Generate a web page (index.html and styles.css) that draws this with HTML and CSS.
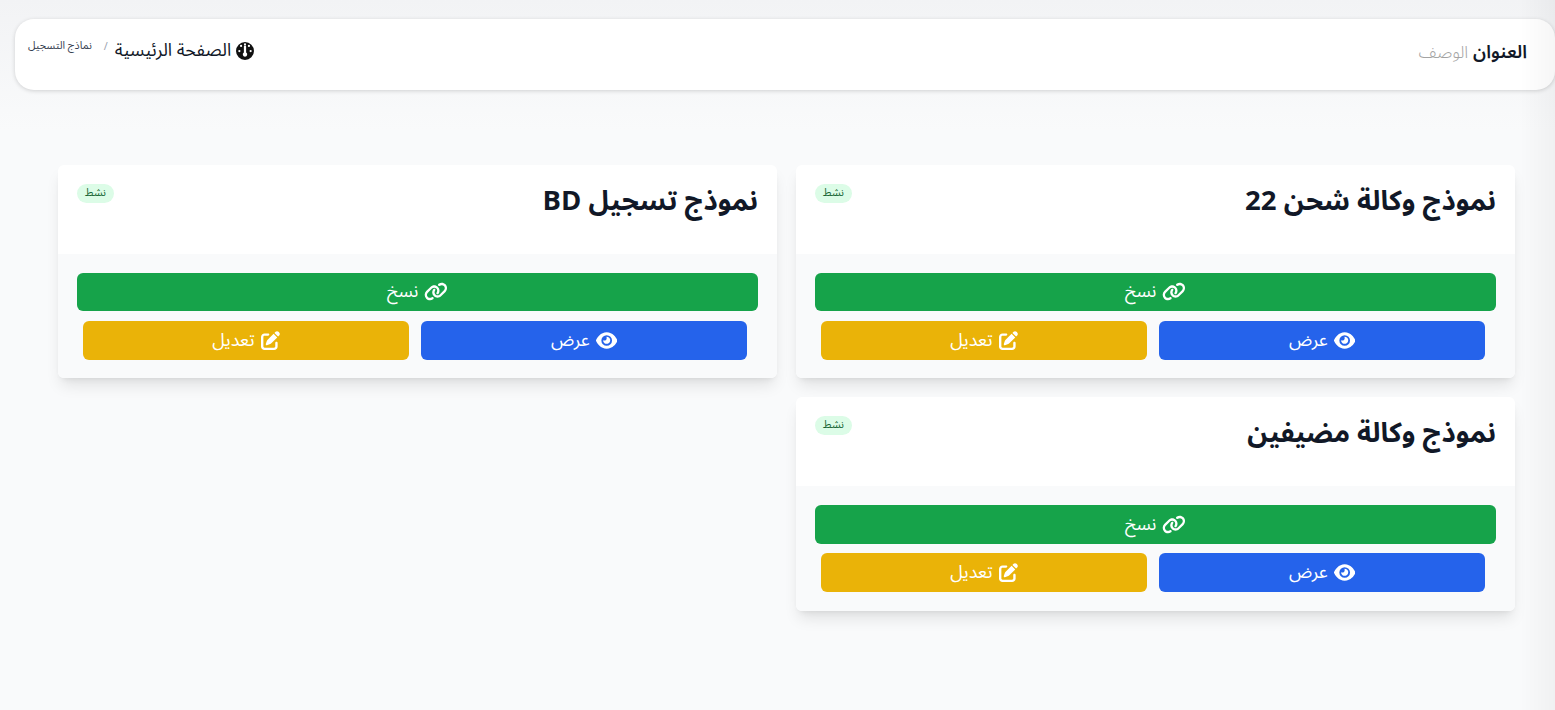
FILE: index.html
```html
<!DOCTYPE html>
<html lang="ar" dir="rtl">
<head>
<meta charset="utf-8">
<title>نماذج التسجيل</title>
<link rel="stylesheet" href="styles.css">
</head>
<body>
<header class="topbar">
  <div class="heading"><strong>العنوان</strong> <span class="desc">الوصف</span></div>
  <nav class="crumbs">
    <span class="crumb-current">نماذج التسجيل</span>
    <span class="sep">/</span>
    <a class="home">
      <svg class="home-icon" viewBox="0 0 512 512"><path d="M256 0a256 256 0 1 0 0 512 256 256 0 1 0 0-512zm32 64a32 32 0 1 1-64 0 32 32 0 1 1 64 0zM256 416a64 64 0 0 1-32-119V128a32 32 0 1 1 64 0v169a64 64 0 0 1-32 119zM144 144a32 32 0 1 1 0-64 32 32 0 1 1 0 64zM96 288a32 32 0 1 1 0-64 32 32 0 1 1 0 64zm320 0a32 32 0 1 1 0-64 32 32 0 1 1 0 64zm-48-144a32 32 0 1 1 0-64 32 32 0 1 1 0 64z" fill-rule="evenodd"/></svg>
      <span>الصفحة الرئيسية</span>
    </a>
  </nav>
</header>
<main class="grid">
  <section class="stack">
    <article class="card">
      <div class="card-head"><h2>نموذج وكالة شحن 22</h2><span class="badge">نشط</span></div>
      <div class="card-foot">
        <a class="btn green"><svg class="ic" viewBox="0 0 640 512"><path d="M580 267c56-56 56-148 0-204-50-50-129-56-186-15l-2 1c-14 10-18 30-7 45s30 18 45 7l2-1c32-23 76-19 104 9 32 32 32 83 0 115L424 336c-32 32-83 32-115 0-28-28-32-72-9-104l1-2c10-14 7-34-7-45s-34-7-45 7l-1 2c-41 57-35 136 15 186 56 56 148 56 204 0zM60 245c-56 56-56 148 0 204 50 50 129 56 186 15l2-1c14-10 18-30 7-45s-30-18-45-7l-2 1c-32 23-76 19-104-9-32-32-32-83 0-115l112-112c32-32 83-32 115 0 28 28 32 72 9 104l-1 2c-10 14-7 34 7 45s34 7 45-7l1-2c41-57 35-136-15-186-56-56-148-56-204 0z"/></svg><span>نسخ</span></a>
        <div class="btn-row">
          <a class="btn blue"><svg class="ic" viewBox="0 0 576 512"><path d="M288 32C207 32 142 69 95 113 48 156 17 208 2 244c-3 8-3 17 0 25 15 36 46 88 93 131 47 44 112 81 193 81s146-37 193-81c47-43 78-95 93-131 3-8 3-17 0-25-15-36-46-88-93-131C434 69 369 32 288 32zM144 256a144 144 0 1 1 288 0 144 144 0 1 1-288 0zm144-64c0 35-29 64-64 64-7 0-14-1-20-3-6-2-12 1-12 7 0 5 1 10 2 15 14 51 67 82 118 68s82-67 68-118c-11-42-48-69-89-71-6 0-9 6-7 12 2 6 4 15 4 26z"/></svg><span>عرض</span></a>
          <a class="btn yellow"><svg class="ic" viewBox="0 0 512 512"><path d="M471.600 21.700c-21.900-21.900-57.300-21.900-79.200 0L362.300 51.700l97.900 97.900 30.100-30.100c21.900-21.900 21.900-57.300 0-79.200L471.600 21.700zm-299.200 220c-6.100 6.100-10.800 13.600-13.500 21.900l-29.600 88.800c-2.900 8.600-.6 18.100 5.800 24.600s15.900 8.700 24.600 5.800l88.800-29.600c8.200-2.700 15.700-7.400 21.900-13.500L437.700 172.300 339.700 74.300 172.400 241.700zM96 64C43 64 0 107 0 160V416c0 53 43 96 96 96H352c53 0 96-43 96-96V320c0-17.700-14.300-32-32-32s-32 14.300-32 32v96c0 17.700-14.300 32-32 32H96c-17.700 0-32-14.300-32-32V160c0-17.700 14.300-32 32-32h96c17.700 0 32-14.300 32-32s-14.300-32-32-32H96z"/></svg><span>تعديل</span></a>
        </div>
      </div>
    </article>
    <article class="card">
      <div class="card-head"><h2>نموذج وكالة مضيفين</h2><span class="badge">نشط</span></div>
      <div class="card-foot">
        <a class="btn green"><svg class="ic" viewBox="0 0 640 512"><path d="M580 267c56-56 56-148 0-204-50-50-129-56-186-15l-2 1c-14 10-18 30-7 45s30 18 45 7l2-1c32-23 76-19 104 9 32 32 32 83 0 115L424 336c-32 32-83 32-115 0-28-28-32-72-9-104l1-2c10-14 7-34-7-45s-34-7-45 7l-1 2c-41 57-35 136 15 186 56 56 148 56 204 0zM60 245c-56 56-56 148 0 204 50 50 129 56 186 15l2-1c14-10 18-30 7-45s-30-18-45-7l-2 1c-32 23-76 19-104-9-32-32-32-83 0-115l112-112c32-32 83-32 115 0 28 28 32 72 9 104l-1 2c-10 14-7 34 7 45s34 7 45-7l1-2c41-57 35-136-15-186-56-56-148-56-204 0z"/></svg><span>نسخ</span></a>
        <div class="btn-row">
          <a class="btn blue"><svg class="ic" viewBox="0 0 576 512"><path d="M288 32C207 32 142 69 95 113 48 156 17 208 2 244c-3 8-3 17 0 25 15 36 46 88 93 131 47 44 112 81 193 81s146-37 193-81c47-43 78-95 93-131 3-8 3-17 0-25-15-36-46-88-93-131C434 69 369 32 288 32zM144 256a144 144 0 1 1 288 0 144 144 0 1 1-288 0zm144-64c0 35-29 64-64 64-7 0-14-1-20-3-6-2-12 1-12 7 0 5 1 10 2 15 14 51 67 82 118 68s82-67 68-118c-11-42-48-69-89-71-6 0-9 6-7 12 2 6 4 15 4 26z"/></svg><span>عرض</span></a>
          <a class="btn yellow"><svg class="ic" viewBox="0 0 512 512"><path d="M471.600 21.700c-21.900-21.900-57.300-21.900-79.200 0L362.300 51.700l97.900 97.900 30.100-30.100c21.900-21.900 21.900-57.300 0-79.200L471.600 21.700zm-299.200 220c-6.100 6.100-10.800 13.600-13.500 21.900l-29.600 88.800c-2.900 8.600-.6 18.100 5.800 24.600s15.900 8.700 24.600 5.800l88.800-29.600c8.200-2.700 15.700-7.400 21.900-13.500L437.700 172.300 339.700 74.300 172.400 241.700zM96 64C43 64 0 107 0 160V416c0 53 43 96 96 96H352c53 0 96-43 96-96V320c0-17.700-14.300-32-32-32s-32 14.300-32 32v96c0 17.700-14.300 32-32 32H96c-17.700 0-32-14.300-32-32V160c0-17.700 14.300-32 32-32h96c17.700 0 32-14.300 32-32s-14.300-32-32-32H96z"/></svg><span>تعديل</span></a>
        </div>
      </div>
    </article>
  </section>
  <section class="stack">
    <article class="card">
      <div class="card-head"><h2>نموذج تسجيل BD</h2><span class="badge">نشط</span></div>
      <div class="card-foot">
        <a class="btn green"><svg class="ic" viewBox="0 0 640 512"><path d="M580 267c56-56 56-148 0-204-50-50-129-56-186-15l-2 1c-14 10-18 30-7 45s30 18 45 7l2-1c32-23 76-19 104 9 32 32 32 83 0 115L424 336c-32 32-83 32-115 0-28-28-32-72-9-104l1-2c10-14 7-34-7-45s-34-7-45 7l-1 2c-41 57-35 136 15 186 56 56 148 56 204 0zM60 245c-56 56-56 148 0 204 50 50 129 56 186 15l2-1c14-10 18-30 7-45s-30-18-45-7l-2 1c-32 23-76 19-104-9-32-32-32-83 0-115l112-112c32-32 83-32 115 0 28 28 32 72 9 104l-1 2c-10 14-7 34 7 45s34 7 45-7l1-2c41-57 35-136-15-186-56-56-148-56-204 0z"/></svg><span>نسخ</span></a>
        <div class="btn-row">
          <a class="btn blue"><svg class="ic" viewBox="0 0 576 512"><path d="M288 32C207 32 142 69 95 113 48 156 17 208 2 244c-3 8-3 17 0 25 15 36 46 88 93 131 47 44 112 81 193 81s146-37 193-81c47-43 78-95 93-131 3-8 3-17 0-25-15-36-46-88-93-131C434 69 369 32 288 32zM144 256a144 144 0 1 1 288 0 144 144 0 1 1-288 0zm144-64c0 35-29 64-64 64-7 0-14-1-20-3-6-2-12 1-12 7 0 5 1 10 2 15 14 51 67 82 118 68s82-67 68-118c-11-42-48-69-89-71-6 0-9 6-7 12 2 6 4 15 4 26z"/></svg><span>عرض</span></a>
          <a class="btn yellow"><svg class="ic" viewBox="0 0 512 512"><path d="M471.600 21.700c-21.900-21.900-57.300-21.900-79.200 0L362.300 51.700l97.900 97.900 30.100-30.100c21.900-21.900 21.900-57.300 0-79.200L471.600 21.700zm-299.200 220c-6.100 6.100-10.800 13.600-13.500 21.900l-29.600 88.800c-2.900 8.600-.6 18.100 5.800 24.600s15.900 8.700 24.600 5.800l88.800-29.600c8.200-2.700 15.700-7.400 21.900-13.500L437.700 172.300 339.700 74.300 172.400 241.700zM96 64C43 64 0 107 0 160V416c0 53 43 96 96 96H352c53 0 96-43 96-96V320c0-17.700-14.300-32-32-32s-32 14.300-32 32v96c0 17.700-14.300 32-32 32H96c-17.700 0-32-14.300-32-32V160c0-17.700 14.300-32 32-32h96c17.700 0 32-14.300 32-32s-14.300-32-32-32H96z"/></svg><span>تعديل</span></a>
        </div>
      </div>
    </article>
  </section>
</main>
</body>
</html>
```

FILE: styles.css
```css
* { box-sizing: border-box; }
html, body { height: 100%; }
body {
  margin: 0;
  overflow: hidden;
  background: linear-gradient(to bottom, #f2f3f5 0, #f9fafb 130px);
  font-family: "Noto Sans Arabic", "Noto Sans", sans-serif;
  color: #111827;
}
body::after {
  content: "";
  position: fixed;
  top: 0;
  bottom: 0;
  right: 0;
  width: 35px;
  background: linear-gradient(to right, rgba(0, 0, 0, 0), rgba(0, 0, 0, .035));
  pointer-events: none;
}
.topbar {
  display: flex;
  justify-content: space-between;
  margin: 19px 0 0 15px;
  height: 71px;
  padding: 0 28px 0 13px;
  background: #fff;
  border-radius: 19px;
  box-shadow: 0 1px 4px rgba(0, 0, 0, .16);
}
.heading { font-size: 18.4px; line-height: 24px; margin-top: 22px; }
.heading strong { font-weight: 600; }
.desc { color: #a3a3a3; font-weight: 300; font-size: 17px; }
.crumbs { display: flex; flex-direction: row-reverse; align-items: flex-start; gap: 7px; margin-top: 20px; }
.crumb-current { font-size: 10.7px; line-height: 14px; color: #374151; }
.sep { font-size: 10.7px; line-height: 14px; color: #9ca3af; margin: 1px 0 0 0; padding-left: 5px; }
.home { display: flex; align-items: center; gap: 5px; font-size: 17.8px; line-height: 24px; color: #111827; }
.home-icon { width: 18px; height: 18px; fill: #111; }
.grid {
  display: grid;
  grid-template-columns: 719px 719px;
  column-gap: 19px;
  padding: 74.7px 40px 0 0;
}
.stack { display: flex; flex-direction: column; gap: 18.9px; }
.card {
  background: #fff;
  border-radius: 6px;
  overflow: hidden;
  box-shadow: 0 10px 15px -3px rgba(0, 0, 0, .1), 0 4px 6px -4px rgba(0, 0, 0, .1);
}
.card-head { display: flex; justify-content: space-between; height: 89px; padding: 19px; }
.card-head h2 { margin: 1px 0 0; font-size: 27.5px; font-weight: 700; line-height: 32px; color: #111827; }
.badge {
  align-self: flex-start;
  width: 37px;
  height: 19px;
  border-radius: 10px;
  background: #dcfce7;
  color: #166534;
  font-size: 10.7px;
  line-height: 18px;
  text-align: center;
}
.card-foot {
  background: #f9fafb;
  padding: 19px 19px 18.8px;
  display: flex;
  flex-direction: column;
  gap: 9.6px;
}
.btn {
  display: flex;
  align-items: center;
  justify-content: center;
  gap: 6px;
  height: 38.4px;
  border-radius: 6px;
  color: #fff;
  font-size: 17.8px;
}
.btn-row { display: flex; gap: 12px; padding: 0 11px 0 6px; }
.btn-row .btn { flex: 1; height: 38.9px; }
.green { background: #16a34a; }
.blue { background: #2563eb; }
.yellow { background: #eab308; }
.ic { height: 19px; width: auto; fill: #fff; }
```
